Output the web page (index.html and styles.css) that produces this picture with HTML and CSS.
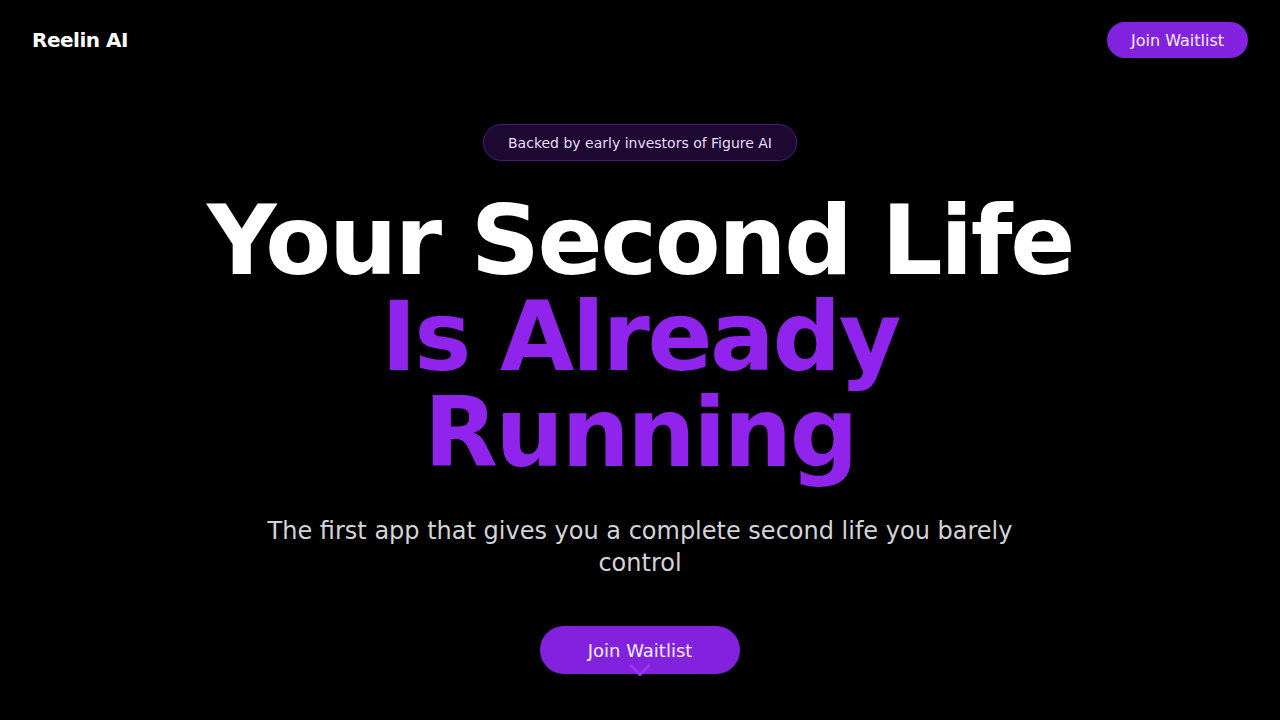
FILE: index.html
```html
<!DOCTYPE html>
<html lang="en">
<head>
<meta charset="utf-8">
<title>Reelin AI</title>
<link rel="stylesheet" href="styles.css">
</head>
<body>
<div class="page">
  <header class="nav">
    <div class="logo">Reelin AI</div>
    <a class="btn btn-sm" href="#">Join Waitlist</a>
  </header>
  <main class="hero">
    <div class="badge">Backed by early investors of Figure AI</div>
    <h1 class="title"><span class="white">Your Second Life</span><span class="purple">Is Already<br>Running</span></h1>
    <p class="sub">The first app that gives you a complete second life you barely control</p>
    <a class="btn btn-lg" href="#">Join Waitlist</a>
  </main>
  <div class="scroll">
    <svg width="36" height="36" viewBox="0 0 24 24" fill="none" stroke="currentColor" stroke-width="2" stroke-linecap="round" stroke-linejoin="round"><path d="m6 9 6 6 6-6"/></svg>
  </div>
</div>
</body>
</html>
```
FILE: styles.css
```css
* { box-sizing: border-box; }
html, body { margin: 0; padding: 0; background: #000; }
body { font-family: "DejaVu Sans", sans-serif; color: #fff; }
.page { position: relative; width: 1280px; height: 720px; overflow: hidden; background: #000; }
.nav { height: 80px; display: flex; align-items: center; justify-content: space-between; padding: 0 32px; }
.logo { font-size: 20px; font-weight: bold; color: #fff; letter-spacing: -0.5px; }
.btn { display: inline-flex; align-items: center; justify-content: center; background: #8322de; color: #f5edff; text-decoration: none; border-radius: 9999px; }
.btn-sm { height: 36px; padding: 0 24px; font-size: 16px; }
.btn-lg { height: 48px; padding: 0 48px; font-size: 18px; }
.hero { display: flex; flex-direction: column; align-items: center; text-align: center; padding-top: 44px; }
.badge { height: 37px; padding: 0 24px; display: flex; align-items: center; font-size: 14px; color: #e9dcf7; background: #1d0832; border: 1px solid #4a1a80; border-radius: 9999px; }
.title { margin: 32px 0 34px; font-size: 96px; line-height: 96px; font-weight: bold; letter-spacing: -2.4px; }
.title span { display: block; }
.white { color: #fff; }
.purple { color: #9124ec; }
.sub { margin: 0 0 47px; max-width: 768px; font-size: 24px; line-height: 32px; color: #d4d4d8; }
.scroll { position: absolute; left: 50%; bottom: 32px; transform: translateX(-50%); color: #9a35f0; height: 36px; }
.scroll svg { display: block; }
```
